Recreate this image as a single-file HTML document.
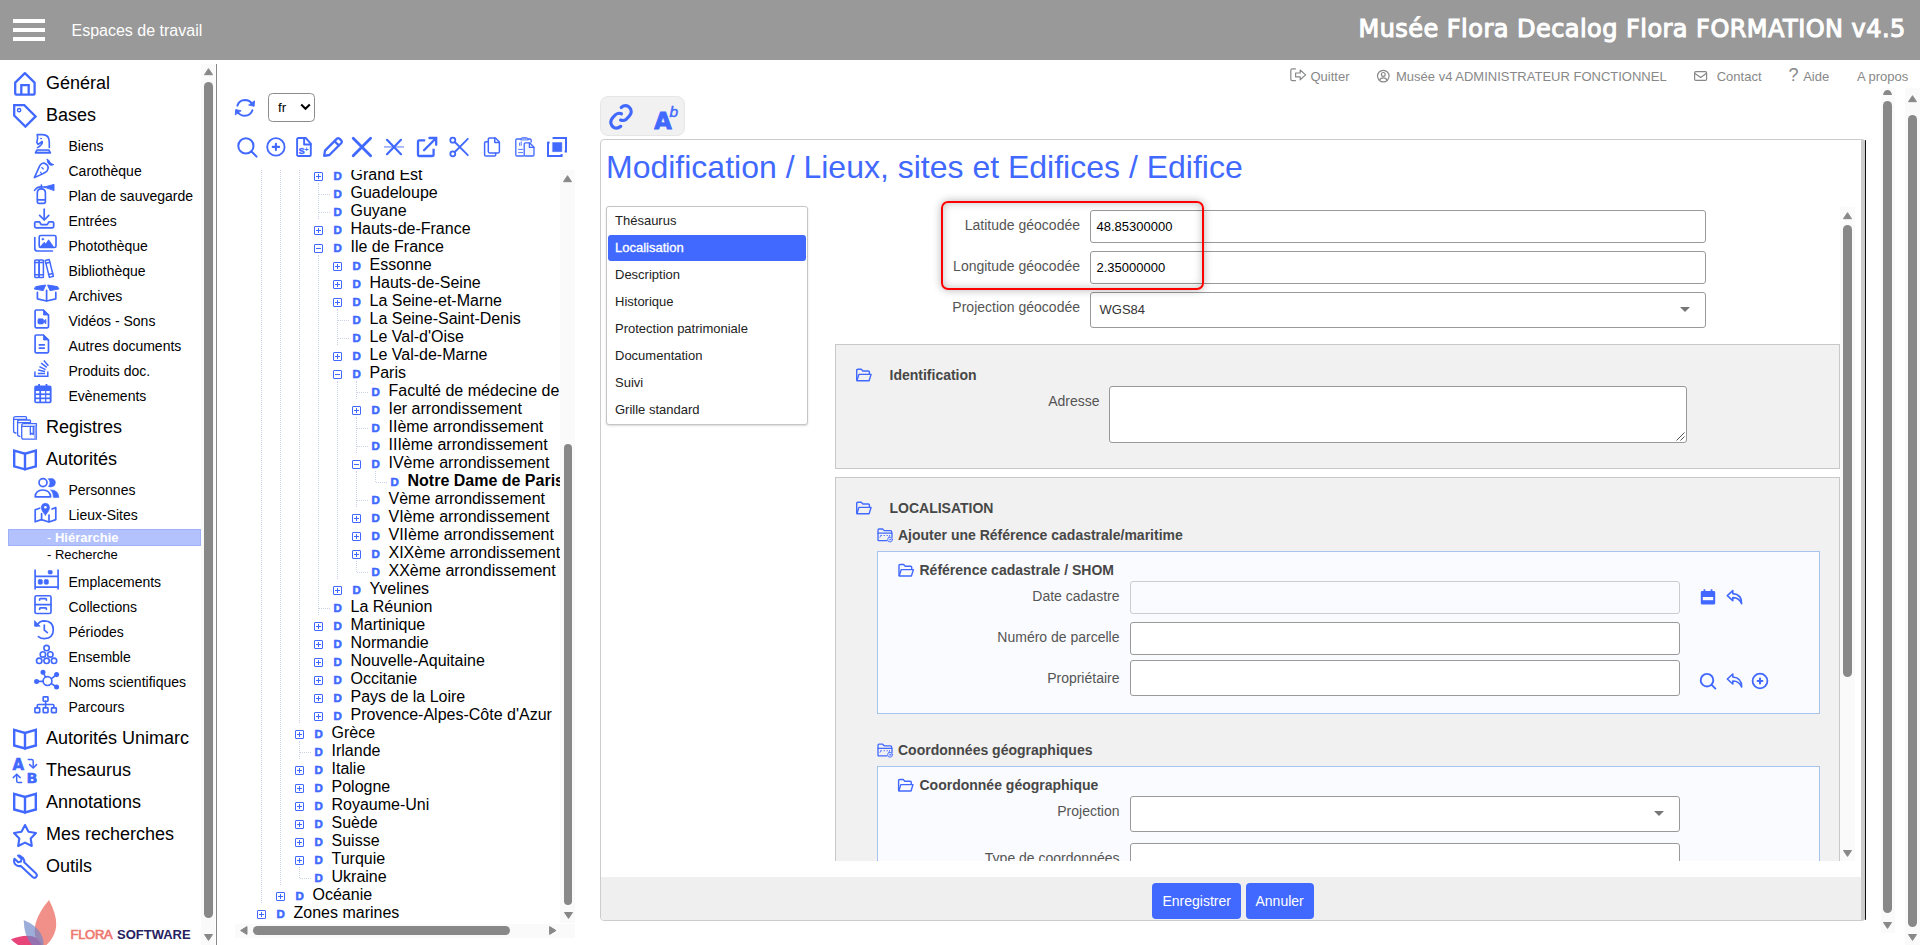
<!DOCTYPE html><html lang="fr"><head><meta charset="utf-8"><title>Flora</title><style>
*{box-sizing:border-box;margin:0;padding:0}
html,body{width:1920px;height:945px;overflow:hidden;background:#fff}
body{font-family:"Liberation Sans",sans-serif;color:#000;position:relative}
.a{position:absolute}
.t{position:absolute;white-space:nowrap;line-height:1}
svg{position:absolute;overflow:visible}
#hdr{left:0;top:0;width:1920px;height:60px;background:#999}
.m1{font-size:18px;left:46px}
.m2{font-size:14px;left:68.5px}
.m3{font-size:13px;left:47px}
.tr{position:absolute;font-size:16px;line-height:18px;height:18px;white-space:nowrap}
.ex{position:absolute;width:9px;height:9px;border:1px solid #4169ff;border-radius:1px;background:#fff}
.ex:before{content:"";position:absolute;left:1px;top:3px;width:5px;height:1px;background:#4169ff}
.ex.p:after{content:"";position:absolute;left:3px;top:1px;width:1px;height:5px;background:#4169ff}
.dd{position:absolute;font-size:11.5px;font-weight:bold;color:#4169ff;line-height:18px;height:18px;-webkit-text-stroke:0.55px #4169ff}
.vl{position:absolute;width:0;border-left:1px dotted #ccd3e6}
.hl{position:absolute;height:0;border-top:1px dotted #ccd3e6}
.thumb{position:absolute;background:#888;border-radius:5px}
.track{position:absolute;background:#fafafa}
.lbl{position:absolute;font-size:14px;color:#555;white-space:nowrap;line-height:1;text-align:right}
.inp{position:absolute;border:1px solid #999;border-radius:3px;background:#fff}
.bt{position:absolute;font-size:14px;font-weight:bold;color:#474747;white-space:nowrap;line-height:1}
.nav{position:absolute;font-size:13px;color:#888;white-space:nowrap;line-height:1;top:69.5px}
.mi{position:absolute;left:615px;font-size:13px;color:#222;line-height:1;white-space:nowrap}
</style></head><body>
<div id="hdr" class="a"></div>
<div class="a" style="left:13px;top:19px;width:32px;height:4px;background:#fff"></div>
<div class="a" style="left:13px;top:28px;width:32px;height:4px;background:#fff"></div>
<div class="a" style="left:13px;top:36.5px;width:32px;height:4px;background:#fff"></div>
<div class="t" style="left:71.5px;top:23px;font-size:16px;color:#fff">Espaces de travail</div>
<div class="t" id="apptitle" style="left:1358.5px;top:16.6px;letter-spacing:0.46px;font-family:DejaVu Sans,Liberation Sans,sans-serif;font-size:24px;color:#fff;-webkit-text-stroke:1.1px #fff">Musée Flora Decalog Flora FORMATION v4.5</div>
<div class="t m1" style="top:74px">Général</div>
<div class="t m1" style="top:106px">Bases</div>
<div class="t m1" style="top:418px">Registres</div>
<div class="t m1" style="top:450px">Autorités</div>
<div class="t m1" style="top:729px">Autorités Unimarc</div>
<div class="t m1" style="top:761px">Thesaurus</div>
<div class="t m1" style="top:793px">Annotations</div>
<div class="t m1" style="top:825px">Mes recherches</div>
<div class="t m1" style="top:857px">Outils</div>
<div class="t m2" style="top:139px">Biens</div>
<div class="t m2" style="top:164px">Carothèque</div>
<div class="t m2" style="top:189px">Plan de sauvegarde</div>
<div class="t m2" style="top:214px">Entrées</div>
<div class="t m2" style="top:239px">Photothèque</div>
<div class="t m2" style="top:264px">Bibliothèque</div>
<div class="t m2" style="top:289px">Archives</div>
<div class="t m2" style="top:314px">Vidéos - Sons</div>
<div class="t m2" style="top:339px">Autres documents</div>
<div class="t m2" style="top:364px">Produits doc.</div>
<div class="t m2" style="top:389px">Evènements</div>
<div class="t m2" style="top:483px">Personnes</div>
<div class="t m2" style="top:508px">Lieux-Sites</div>
<div class="t m2" style="top:575px">Emplacements</div>
<div class="t m2" style="top:600px">Collections</div>
<div class="t m2" style="top:625px">Périodes</div>
<div class="t m2" style="top:650px">Ensemble</div>
<div class="t m2" style="top:675px">Noms scientifiques</div>
<div class="t m2" style="top:700px">Parcours</div>
<div class="a" style="left:8px;top:529px;width:193px;height:17px;background:#b3c2fc;border:1px solid #9fb1fa"></div>
<div class="t m3" style="top:531px;color:#fff">- <b>Hiérarchie</b></div>
<div class="t m3" style="top:548px">- Recherche</div>
<div class="track" style="left:201px;top:64px;width:14px;height:881px"></div>
<div class="thumb" style="left:204px;top:82px;width:9px;height:836px"></div>
<svg style="left:204px;top:68.3px" width="9" height="8"><path d="M4.5 0.7L8.5 6.7H0.5z" fill="#888" stroke="#888" stroke-width="1" stroke-linejoin="round"/></svg>
<svg style="left:204px;top:934px" width="9" height="8"><path d="M0.5 0.5H8.5L4.5 6.4z" fill="#888" stroke="#888" stroke-width="1" stroke-linejoin="round"/></svg>
<div class="a" style="left:216px;top:64px;width:1px;height:881px;background:#888"></div>
<div class="t" style="left:70.5px;top:927.8px;font-size:13px;color:#ef7a72;letter-spacing:-0.3px;-webkit-text-stroke:0.7px #ef7a72">FLORA</div>
<div class="t" style="left:117px;top:927.8px;font-size:13px;font-weight:bold;color:#262262">SOFTWARE</div>
<svg style="left:0;top:895px" width="70" height="50" viewBox="0 895 70 50"><path d="M49 900Q58.5 918 55.5 930Q53 940 44 947H40Q32 935 36 922Q39.5 911 49 900z" fill="#f09088"/><path d="M10.9 939.3Q24 934 33 936.5Q40 939 42 947H22Q15 944 10.9 939.3z" fill="#e8457a"/><path d="M23.7 920Q36 925 41 934Q44.5 941 43 947H34Q24 938 23.7 920z" fill="#6f86c8" fill-opacity="0.68"/></svg>
<div class="a" id="tree" style="left:236px;top:170px;width:325px;height:752px;overflow:hidden">
<div class="vl" style="left:25.0px;top:-5px;height:738px"></div>
<div class="vl" style="left:44.0px;top:-5px;height:720px"></div>
<div class="vl" style="left:63.0px;top:-5px;height:558px"></div>
<div class="vl" style="left:63.0px;top:571px;height:18px"></div>
<div class="vl" style="left:63.0px;top:697px;height:11px"></div>
<div class="vl" style="left:82.0px;top:13px;height:36px"></div>
<div class="vl" style="left:82.0px;top:85px;height:360px"></div>
<div class="vl" style="left:101.0px;top:139px;height:36px"></div>
<div class="vl" style="left:101.0px;top:211px;height:198px"></div>
<div class="vl" style="left:120.0px;top:211px;height:18px"></div>
<div class="vl" style="left:120.0px;top:247px;height:36px"></div>
<div class="vl" style="left:120.0px;top:301px;height:36px"></div>
<div class="vl" style="left:120.0px;top:391px;height:11px"></div>
<div class="vl" style="left:139.0px;top:301px;height:11px"></div>
<div class="ex p" style="left:78.0px;top:2px"></div>
<div class="dd" style="left:97.5px;top:-3.5px">D</div>
<div class="tr" style="left:114.5px;top:-4px;">Grand Est</div>
<div class="hl" style="left:83.0px;top:24px;width:10.5px"></div>
<div class="dd" style="left:97.5px;top:14.5px">D</div>
<div class="tr" style="left:114.5px;top:14px;">Guadeloupe</div>
<div class="hl" style="left:83.0px;top:42px;width:10.5px"></div>
<div class="dd" style="left:97.5px;top:32.5px">D</div>
<div class="tr" style="left:114.5px;top:32px;">Guyane</div>
<div class="ex p" style="left:78.0px;top:56px"></div>
<div class="dd" style="left:97.5px;top:50.5px">D</div>
<div class="tr" style="left:114.5px;top:50px;">Hauts-de-France</div>
<div class="ex " style="left:78.0px;top:74px"></div>
<div class="dd" style="left:97.5px;top:68.5px">D</div>
<div class="tr" style="left:114.5px;top:68px;">Ile de France</div>
<div class="ex p" style="left:97.0px;top:92px"></div>
<div class="dd" style="left:116.5px;top:86.5px">D</div>
<div class="tr" style="left:133.5px;top:86px;">Essonne</div>
<div class="ex p" style="left:97.0px;top:110px"></div>
<div class="dd" style="left:116.5px;top:104.5px">D</div>
<div class="tr" style="left:133.5px;top:104px;">Hauts-de-Seine</div>
<div class="ex p" style="left:97.0px;top:128px"></div>
<div class="dd" style="left:116.5px;top:122.5px">D</div>
<div class="tr" style="left:133.5px;top:122px;">La Seine-et-Marne</div>
<div class="hl" style="left:102.0px;top:150px;width:10.5px"></div>
<div class="dd" style="left:116.5px;top:140.5px">D</div>
<div class="tr" style="left:133.5px;top:140px;">La Seine-Saint-Denis</div>
<div class="hl" style="left:102.0px;top:168px;width:10.5px"></div>
<div class="dd" style="left:116.5px;top:158.5px">D</div>
<div class="tr" style="left:133.5px;top:158px;">Le Val-d'Oise</div>
<div class="ex p" style="left:97.0px;top:182px"></div>
<div class="dd" style="left:116.5px;top:176.5px">D</div>
<div class="tr" style="left:133.5px;top:176px;">Le Val-de-Marne</div>
<div class="ex " style="left:97.0px;top:200px"></div>
<div class="dd" style="left:116.5px;top:194.5px">D</div>
<div class="tr" style="left:133.5px;top:194px;">Paris</div>
<div class="hl" style="left:121.0px;top:222px;width:10.5px"></div>
<div class="dd" style="left:135.5px;top:212.5px">D</div>
<div class="tr" style="left:152.5px;top:212px;">Faculté de médecine de Paris</div>
<div class="ex p" style="left:116.0px;top:236px"></div>
<div class="dd" style="left:135.5px;top:230.5px">D</div>
<div class="tr" style="left:152.5px;top:230px;">Ier arrondissement</div>
<div class="hl" style="left:121.0px;top:258px;width:10.5px"></div>
<div class="dd" style="left:135.5px;top:248.5px">D</div>
<div class="tr" style="left:152.5px;top:248px;">IIème arrondissement</div>
<div class="hl" style="left:121.0px;top:276px;width:10.5px"></div>
<div class="dd" style="left:135.5px;top:266.5px">D</div>
<div class="tr" style="left:152.5px;top:266px;">IIIème arrondissement</div>
<div class="ex " style="left:116.0px;top:290px"></div>
<div class="dd" style="left:135.5px;top:284.5px">D</div>
<div class="tr" style="left:152.5px;top:284px;">IVème arrondissement</div>
<div class="hl" style="left:140.0px;top:312px;width:10.5px"></div>
<div class="dd" style="left:154.5px;top:302.5px">D</div>
<div class="tr" style="left:171.5px;top:302px;font-weight:bold;">Notre Dame de Paris</div>
<div class="hl" style="left:121.0px;top:330px;width:10.5px"></div>
<div class="dd" style="left:135.5px;top:320.5px">D</div>
<div class="tr" style="left:152.5px;top:320px;">Vème arrondissement</div>
<div class="ex p" style="left:116.0px;top:344px"></div>
<div class="dd" style="left:135.5px;top:338.5px">D</div>
<div class="tr" style="left:152.5px;top:338px;">VIème arrondissement</div>
<div class="ex p" style="left:116.0px;top:362px"></div>
<div class="dd" style="left:135.5px;top:356.5px">D</div>
<div class="tr" style="left:152.5px;top:356px;">VIIème arrondissement</div>
<div class="ex p" style="left:116.0px;top:380px"></div>
<div class="dd" style="left:135.5px;top:374.5px">D</div>
<div class="tr" style="left:152.5px;top:374px;">XIXème arrondissement</div>
<div class="hl" style="left:121.0px;top:402px;width:10.5px"></div>
<div class="dd" style="left:135.5px;top:392.5px">D</div>
<div class="tr" style="left:152.5px;top:392px;">XXème arrondissement</div>
<div class="ex p" style="left:97.0px;top:416px"></div>
<div class="dd" style="left:116.5px;top:410.5px">D</div>
<div class="tr" style="left:133.5px;top:410px;">Yvelines</div>
<div class="hl" style="left:83.0px;top:438px;width:10.5px"></div>
<div class="dd" style="left:97.5px;top:428.5px">D</div>
<div class="tr" style="left:114.5px;top:428px;">La Réunion</div>
<div class="ex p" style="left:78.0px;top:452px"></div>
<div class="dd" style="left:97.5px;top:446.5px">D</div>
<div class="tr" style="left:114.5px;top:446px;">Martinique</div>
<div class="ex p" style="left:78.0px;top:470px"></div>
<div class="dd" style="left:97.5px;top:464.5px">D</div>
<div class="tr" style="left:114.5px;top:464px;">Normandie</div>
<div class="ex p" style="left:78.0px;top:488px"></div>
<div class="dd" style="left:97.5px;top:482.5px">D</div>
<div class="tr" style="left:114.5px;top:482px;">Nouvelle-Aquitaine</div>
<div class="ex p" style="left:78.0px;top:506px"></div>
<div class="dd" style="left:97.5px;top:500.5px">D</div>
<div class="tr" style="left:114.5px;top:500px;">Occitanie</div>
<div class="ex p" style="left:78.0px;top:524px"></div>
<div class="dd" style="left:97.5px;top:518.5px">D</div>
<div class="tr" style="left:114.5px;top:518px;">Pays de la Loire</div>
<div class="ex p" style="left:78.0px;top:542px"></div>
<div class="dd" style="left:97.5px;top:536.5px">D</div>
<div class="tr" style="left:114.5px;top:536px;">Provence-Alpes-Côte d'Azur</div>
<div class="ex p" style="left:59.0px;top:560px"></div>
<div class="dd" style="left:78.5px;top:554.5px">D</div>
<div class="tr" style="left:95.5px;top:554px;">Grèce</div>
<div class="hl" style="left:64.0px;top:582px;width:10.5px"></div>
<div class="dd" style="left:78.5px;top:572.5px">D</div>
<div class="tr" style="left:95.5px;top:572px;">Irlande</div>
<div class="ex p" style="left:59.0px;top:596px"></div>
<div class="dd" style="left:78.5px;top:590.5px">D</div>
<div class="tr" style="left:95.5px;top:590px;">Italie</div>
<div class="ex p" style="left:59.0px;top:614px"></div>
<div class="dd" style="left:78.5px;top:608.5px">D</div>
<div class="tr" style="left:95.5px;top:608px;">Pologne</div>
<div class="ex p" style="left:59.0px;top:632px"></div>
<div class="dd" style="left:78.5px;top:626.5px">D</div>
<div class="tr" style="left:95.5px;top:626px;">Royaume-Uni</div>
<div class="ex p" style="left:59.0px;top:650px"></div>
<div class="dd" style="left:78.5px;top:644.5px">D</div>
<div class="tr" style="left:95.5px;top:644px;">Suède</div>
<div class="ex p" style="left:59.0px;top:668px"></div>
<div class="dd" style="left:78.5px;top:662.5px">D</div>
<div class="tr" style="left:95.5px;top:662px;">Suisse</div>
<div class="ex p" style="left:59.0px;top:686px"></div>
<div class="dd" style="left:78.5px;top:680.5px">D</div>
<div class="tr" style="left:95.5px;top:680px;">Turquie</div>
<div class="hl" style="left:64.0px;top:708px;width:10.5px"></div>
<div class="dd" style="left:78.5px;top:698.5px">D</div>
<div class="tr" style="left:95.5px;top:698px;">Ukraine</div>
<div class="ex p" style="left:40.0px;top:722px"></div>
<div class="dd" style="left:59.5px;top:716.5px">D</div>
<div class="tr" style="left:76.5px;top:716px;">Océanie</div>
<div class="ex p" style="left:21.0px;top:740px"></div>
<div class="dd" style="left:40.5px;top:734.5px">D</div>
<div class="tr" style="left:57.5px;top:734px;">Zones marines</div>
</div>
<div class="track" style="left:560px;top:170px;width:15px;height:753px"></div>
<div class="thumb" style="left:563.5px;top:444px;width:8.5px;height:461px"></div>
<svg style="left:563px;top:175px" width="9" height="8"><path d="M4.5 0.7L8.5 6.7H0.5z" fill="#888" stroke="#888" stroke-width="1" stroke-linejoin="round"/></svg>
<svg style="left:563.5px;top:912px" width="9" height="8"><path d="M0.5 0.5H8.5L4.5 6.4z" fill="#888" stroke="#888" stroke-width="1" stroke-linejoin="round"/></svg>
<div class="track" style="left:235px;top:923.5px;width:340px;height:14.5px"></div>
<div class="thumb" style="left:253px;top:926px;width:257px;height:9px"></div>
<svg style="left:239.5px;top:926px" width="8" height="9"><path d="M0.6 4.5L7 0.6V8.4z" fill="#888" stroke="#888" stroke-width="1" stroke-linejoin="round"/></svg>
<svg style="left:548.5px;top:926px" width="8" height="9"><path d="M7 4.5L0.6 0.6V8.4z" fill="#888" stroke="#888" stroke-width="1" stroke-linejoin="round"/></svg>
<div class="a" style="left:268px;top:93px;width:47px;height:29px;border:1px solid #8c8c8c;border-radius:4.5px;background:#fff"></div>
<div class="t" style="left:278px;top:100.8px;font-size:13.3px">fr</div>
<svg style="left:300px;top:103px" width="11" height="8"><path d="M1.2 1.5L5.5 5.8L9.8 1.5" fill="none" stroke="#000" stroke-width="2"/></svg>
<div class="nav" style="left:1310.5px">Quitter</div>
<div class="nav" style="left:1396px">Musée v4 ADMINISTRATEUR FONCTIONNEL</div>
<div class="nav" style="left:1716.7px">Contact</div>
<div class="nav" style="left:1803.2px">Aide</div>
<div class="nav" style="left:1857px">A propos</div>
<div class="track" style="left:1880.5px;top:88px;width:14.5px;height:845px"></div>
<div class="thumb" style="left:1883px;top:101px;width:9px;height:812px"></div>
<svg style="left:1883px;top:90px" width="9" height="5"><path d="M0 5Q1 0 4.5 0Q8 0 9 5z" fill="#888"/></svg>
<svg style="left:1883px;top:922px" width="9" height="8"><path d="M0.5 0.5H8.5L4.5 6.4z" fill="#888" stroke="#888" stroke-width="1" stroke-linejoin="round"/></svg>
<div class="track" style="left:1905px;top:88px;width:15px;height:857px"></div>
<div class="thumb" style="left:1908px;top:115px;width:9px;height:812px"></div>
<svg style="left:1908px;top:95px" width="9" height="8"><path d="M4.5 0.7L8.5 6.7H0.5z" fill="#888" stroke="#888" stroke-width="1" stroke-linejoin="round"/></svg>
<svg style="left:1908px;top:934px" width="9" height="8"><path d="M0.5 0.5H8.5L4.5 6.4z" fill="#888" stroke="#888" stroke-width="1" stroke-linejoin="round"/></svg>
<div class="a" style="left:600px;top:96px;width:85px;height:40px;background:#f1f1f1;border:1px solid #e6e6e6;border-radius:8px"></div>
<div class="a" style="left:600px;top:139px;width:1266px;height:782px;border:1px solid #ccc;border-radius:4px;background:#fff"></div>
<div class="a" style="left:1860.5px;top:140px;width:5px;height:780px;background:#ccc"></div>
<div class="a" style="left:1865px;top:140px;width:1.4px;height:780px;background:#111;border-radius:0 3px 3px 0"></div>
<div class="a" style="left:601px;top:877px;width:1259.5px;height:43px;background:#efefef;border-radius:0 0 0 3px"></div>
<div class="t" id="ttl" style="left:606px;top:151px;font-size:32px;color:#4169ff">Modification / Lieux, sites et Edifices / Edifice</div>
<div class="a" style="left:606px;top:206px;width:202px;height:219px;border:1px solid #c5c5c5;border-radius:3px;background:#fff;box-shadow:0 1px 2px rgba(0,0,0,.15)"></div>
<div class="a" style="left:608px;top:235px;width:198px;height:26px;background:#4169ff;border-radius:3px"></div>
<div class="mi" style="top:214px;">Thésaurus</div>
<div class="mi" style="top:241px;color:#fff;-webkit-text-stroke:0.3px #fff;">Localisation</div>
<div class="mi" style="top:268px;">Description</div>
<div class="mi" style="top:295px;">Historique</div>
<div class="mi" style="top:322px;">Protection patrimoniale</div>
<div class="mi" style="top:349px;">Documentation</div>
<div class="mi" style="top:376px;">Suivi</div>
<div class="mi" style="top:403px;">Grille standard</div>
<div class="lbl" style="right:840px;top:217.5px">Latitude géocodée</div>
<div class="lbl" style="right:840px;top:258.5px">Longitude géocodée</div>
<div class="lbl" style="right:840px;top:299.5px">Projection géocodée</div>
<div class="inp" style="left:1090px;top:210px;width:616px;height:33px"></div>
<div class="inp" style="left:1090px;top:251px;width:616px;height:33px"></div>
<div class="inp" style="left:1090px;top:292px;width:616px;height:36px"></div>
<div class="t" style="left:1096.5px;top:220px;font-size:13px">48.85300000</div>
<div class="t" style="left:1096.5px;top:261px;font-size:13px">2.35000000</div>
<div class="t" style="left:1099.5px;top:303px;font-size:13px;color:#333">WGS84</div>
<svg style="left:1680px;top:307px" width="10" height="5"><path d="M0 0H10L5 5z" fill="#777"/></svg>
<div class="a" style="left:940.7px;top:201px;width:263px;height:89px;border:2px solid #f00;border-radius:7px;box-shadow:0 0 8px rgba(0,0,0,.3),inset 0 0 8px rgba(0,0,0,.25)"></div>
<div class="a" style="left:830px;top:340px;width:1012px;height:521px;overflow:hidden">
<div class="a" style="left:5px;top:4px;width:1005px;height:125px;background:#f1f1f1;border:1px solid #c8c8c8"></div>
<div class="a" style="left:5px;top:137px;width:1005px;height:600px;background:#f1f1f1;border:1px solid #c8c8c8"></div>
<div class="a" style="left:47px;top:211px;width:943px;height:163px;background:#fafbfe;border:1px solid #a8c4ee"></div>
<div class="a" style="left:47px;top:426px;width:943px;height:300px;background:#fafbfe;border:1px solid #a8c4ee"></div>
<div class="bt" style="left:59.5px;top:27.5px">Identification</div>
<div class="bt" style="left:59.5px;top:160.5px">LOCALISATION</div>
<div class="bt" style="left:68px;top:187.5px">Ajouter une Référence cadastrale/maritime</div>
<div class="bt" style="left:89.5px;top:223.0px">Référence cadastrale / SHOM</div>
<div class="bt" style="left:68px;top:402.5px">Coordonnées géographiques</div>
<div class="bt" style="left:89.5px;top:437.5px">Coordonnée géographique</div>
<div class="lbl" style="right:742.5px;top:53.5px">Adresse</div>
<div class="lbl" style="right:722.5px;top:248.5px">Date cadastre</div>
<div class="lbl" style="right:722.5px;top:289.5px">Numéro de parcelle</div>
<div class="lbl" style="right:722.5px;top:330.5px">Propriétaire</div>
<div class="lbl" style="right:722.5px;top:463.70000000000005px">Projection</div>
<div class="lbl" style="right:722.5px;top:510.79999999999995px">Type de coordonnées</div>
<div class="inp" style="left:279px;top:46px;width:578px;height:57px;"></div>
<div class="inp" style="left:300px;top:241px;width:550px;height:33px;border-color:#ccc;background:#fafbfe"></div>
<div class="inp" style="left:300px;top:282px;width:550px;height:33px;"></div>
<div class="inp" style="left:300px;top:320px;width:550px;height:36px;"></div>
<div class="inp" style="left:300px;top:456px;width:550px;height:36px;"></div>
<div class="inp" style="left:300px;top:503px;width:550px;height:36px;"></div>
<svg style="left:824px;top:470.5px" width="10" height="5"><path d="M0 0H10L5 5z" fill="#777"/></svg>
<svg style="left:846px;top:92px" width="9" height="9"><path d="M8.5 0.5L0.5 8.5M8.5 4.5L4.5 8.5" stroke="#555" stroke-width="1" fill="none"/></svg>
</div>
<div class="track" style="left:1840px;top:206.5px;width:15px;height:654.5px"></div>
<div class="thumb" style="left:1843px;top:225px;width:9px;height:452px"></div>
<svg style="left:1843px;top:212px" width="9" height="8"><path d="M4.5 0.7L8.5 6.7H0.5z" fill="#888" stroke="#888" stroke-width="1" stroke-linejoin="round"/></svg>
<svg style="left:1843px;top:850px" width="9" height="8"><path d="M0.5 0.5H8.5L4.5 6.4z" fill="#888" stroke="#888" stroke-width="1" stroke-linejoin="round"/></svg>
<div class="a" style="left:1152px;top:883px;width:89px;height:36px;background:#4169ff;border-radius:4px"></div>
<div class="a" style="left:1246px;top:883px;width:68px;height:36px;background:#4169ff;border-radius:4px"></div>
<div class="t" style="left:1162.5px;top:894px;font-size:14px;color:#fff">Enregistrer</div>
<div class="t" style="left:1255.5px;top:894px;font-size:14px;color:#fff">Annuler</div>
<svg style="left:0;top:0;pointer-events:none" width="1920" height="945" viewBox="0 0 1920 945"><g transform="translate(0 0)" fill="none" stroke="#4169ff" stroke-width="2.3" stroke-linecap="round" stroke-linejoin="round" ><path d="M15.2 82.6L24.9 73.2L34.6 82.6V93.4Q34.6 94.6 33.4 94.6H16.4Q15.2 94.6 15.2 93.4z"/><path d="M21.3 94.3V85.2H28.7V94.3" stroke-linejoin="miter" stroke-linecap="butt"/></g>
<g transform="translate(0 0)" fill="none" stroke="#4169ff" stroke-width="2.3" stroke-linecap="round" stroke-linejoin="round" ><path d="M14.2 105.1H24.3L35.6 116.4L25.4 126.6L14.2 115.6z" stroke-linejoin="miter"/><circle cx="19.1" cy="110.2" r="1.6" stroke-width="1.5"/></g>
<g transform="translate(0 0)" fill="none" stroke="#4169ff" stroke-width="1.3" stroke-linecap="round" stroke-linejoin="round" ><path d="M26.5 419V417.6Q26.5 416.6 25.5 416.6H15.5Q13.6 416.6 13.6 418.6V431Q13.6 433 16 433"/><path d="M14 419.3H26"/><path d="M30.5 422.5V421Q30.5 420 29.5 420H19.5Q17.6 420 17.6 422V434.5Q17.6 436.3 20 436.3"/><path d="M18 422.7H30"/><path d="M23.6 423.6H36.4V439.2H23.6Q21.7 439.2 21.7 437.3V425.5Q21.7 423.6 23.6 423.6z"/><path d="M22 426.4H36"/><path d="M30.3 426.5V434.5L31.8 433.2L33.3 434.5V426.5"/><path d="M35.3 426.5V438.5" stroke-width="2.2" stroke="#8aa0ff"/></g>
<g transform="translate(0 449)" fill="none" stroke="#4169ff" stroke-width="2.4" stroke-linecap="round" stroke-linejoin="round" ><path d="M14.2 1.7L25 4.7L35.8 1.7V17.3L25 20.3L14.2 17.3z" stroke-linejoin="miter"/><path d="M25 4.7V20.3"/></g>
<g transform="translate(0 728.2)" fill="none" stroke="#4169ff" stroke-width="2.4" stroke-linecap="round" stroke-linejoin="round" ><path d="M14.2 1.7L25 4.7L35.8 1.7V17.3L25 20.3L14.2 17.3z" stroke-linejoin="miter"/><path d="M25 4.7V20.3"/></g>
<g transform="translate(0 792.2)" fill="none" stroke="#4169ff" stroke-width="2.4" stroke-linecap="round" stroke-linejoin="round" ><path d="M14.2 1.7L25 4.7L35.8 1.7V17.3L25 20.3L14.2 17.3z" stroke-linejoin="miter"/><path d="M25 4.7V20.3"/></g>
<text x="12.6" y="769.9" font-family="'DejaVu Sans','Liberation Sans',sans-serif" font-weight="bold" font-size="15" fill="#4169ff" stroke="#4169ff" stroke-width="0.5">A</text>
<text x="26.6" y="783.2" font-family="'DejaVu Sans','Liberation Sans',sans-serif" font-weight="bold" font-size="14.5" fill="#4169ff" stroke="#4169ff" stroke-width="0.5">B</text>
<g transform="translate(0 0)" fill="none" stroke="#4169ff" stroke-width="1.5" stroke-linecap="round" stroke-linejoin="round" ><path d="M28.3 759.6H31.5Q33.2 759.6 33.2 761.3V767.6"/><path d="M29.6 764.6L33.2 768L36.6 764.6"/><path d="M21.6 782.6H18.4Q16.7 782.6 16.7 780.9V774.4"/><path d="M13.3 777.6L16.7 774.2L20.2 777.6"/></g>
<g transform="translate(0 0)" fill="none" stroke="#4169ff" stroke-width="2.1" stroke-linecap="round" stroke-linejoin="round" ><path d="M25.0 825.0L28.5 831.7L36.0 833.0L30.7 838.5L31.8 846.0L25.0 842.6L18.2 846.0L19.3 838.5L14.0 833.0L21.5 831.7z" stroke-linejoin="round"/></g>
<path d="M20.9 856.3Q23.6 857.6 24.3 860.4L24.2 862.3L36.1 873.6Q37.7 875.3 36.1 877Q34.4 878.7 32.6 877.1L20.8 865.9Q17.4 866.8 15.3 864.4Q13.3 861.9 14.5 858.7L18.2 862.3L20.9 861.6L21.6 859L18 855.6Q19.4 855.3 20.9 856.3z" fill="none" stroke="#4169ff" stroke-width="2.05" stroke-linejoin="round"/>
<g transform="translate(0 0)" fill="none" stroke="#4169ff" stroke-width="1.65" stroke-linecap="round" stroke-linejoin="round" ><path d="M37.6 147.6Q43 144.5 42.2 141.5L38.2 144.4L36.8 142.6Q38.4 138.5 37.2 134.6H42.5Q49.3 134.6 49.3 142V147.6"/><circle cx="41" cy="138.6" r="0.5" stroke-width="1"/><path d="M37 150H48.8L50.4 152.8H35.4z" fill="#b9c6ff"/></g>
<g transform="translate(0 0)" fill="none" stroke="#4169ff" stroke-width="1.65" stroke-linecap="round" stroke-linejoin="round" ><path d="M34.4 177.6L39.8 165.6Q42.3 161.6 46.2 164.2Q49.8 167.2 46.8 171.2Q45.6 172.6 34.4 177.6z"/><path d="M41.8 167.5L43.3 169M40.3 172.2L41.6 173.5" stroke-width="1.1"/><path d="M47.2 159.4Q47 162.2 49 164.4Q51.4 166.2 53.8 164.6Q51.5 164.2 50.2 162.6Q49.6 160 47.2 159.4z" fill="#4169ff" stroke-width="1"/></g>
<g transform="translate(0 0)" fill="none" stroke="#4169ff" stroke-width="1.65" stroke-linecap="round" stroke-linejoin="round" ><path d="M37.3 193Q37.3 188.8 41.4 188.8Q45.4 188.8 45.4 193V201.6Q45.4 203.4 43.6 203.4H39.1Q37.3 203.4 37.3 201.6z"/><path d="M37.5 199.8H45.2"/><path d="M41.4 188.6V185"/><path d="M34.6 190.4Q37 186.6 41.4 186.9L45 187"/><path d="M44.5 187L54 184.4V190.2z" fill="#4169ff" stroke-width="1"/></g>
<g transform="translate(0 0)" fill="none" stroke="#4169ff" stroke-width="1.7" stroke-linecap="round" stroke-linejoin="round" ><path d="M44.2 209.2V219.6"/><path d="M39.6 215.4L44.2 220L48.8 215.4"/><path d="M39.5 221.8H36Q34.7 221.8 34.7 223.1V226.5Q34.7 227.8 36 227.8H52.4Q53.7 227.8 53.7 226.5V223.1Q53.7 221.8 52.4 221.8H49L47.2 224.6H41.2z" fill="#eef1ff"/></g>
<g transform="translate(0 0)" fill="none" stroke="#4169ff" stroke-width="1.65" stroke-linecap="round" stroke-linejoin="round" ><rect x="39.2" y="235.5" width="16.8" height="12" rx="1.6"/><path d="M34.8 237.6V248.4Q34.8 251 37.4 251H52.4"/><path d="M40 247L44.2 242.3L45.8 244L48.6 239.8L53.6 247z" fill="#4169ff" stroke-width="0.8"/><circle cx="42.8" cy="239.2" r="0.9" fill="#4169ff" stroke-width="0.6"/></g>
<g transform="translate(0 0)" fill="none" stroke="#4169ff" stroke-width="1.5" stroke-linecap="round" stroke-linejoin="round" ><rect x="34.8" y="260" width="4.3" height="17.6" rx="0.8"/><rect x="39.1" y="260" width="4.3" height="17.6" rx="0.8"/><path d="M34.8 262.6H43.4M34.8 274.8H43.4"/><path d="M45.2 260.6L49.2 259.6L53.4 276.3L49.4 277.4z"/><path d="M45.9 263.2L49.9 262.2M48.6 274.6L52.7 273.6"/></g>
<g transform="translate(0 0)" fill="none" stroke="#4169ff" stroke-width="1.7" stroke-linecap="round" stroke-linejoin="round" ><path d="M36 286.6L45.6 285L43.2 290.6L34.6 289z" fill="#4169ff" stroke-width="1"/><path d="M57.2 286.6L47.6 285L50 290.6L58.6 289z" fill="#4169ff" stroke-width="1"/><path d="M37.4 292.4V298.8L46.6 301L55.8 298.8V292.4"/><path d="M46.6 290.4V300.8"/></g>
<g transform="translate(34.3 309.2)" fill="none" stroke="#4169ff" stroke-width="1.7" stroke-linecap="round" stroke-linejoin="round" ><path d="M2 0.8H9L14.2 6V17.4Q14.2 18.6 13 18.6H2Q0.8 18.6 0.8 17.4V2Q0.8 0.8 2 0.8z"/><path d="M9.2 0.8V5.8H14.2z" fill="#4169ff" stroke-width="0.8"/><rect x="3.6" y="9.6" width="5.6" height="5.2" rx="1.2" fill="#4169ff" stroke-width="0.6"/><path d="M9 12.2L11.6 10.2V14.2z" fill="#4169ff" stroke-width="0.8"/></g>
<g transform="translate(34.3 334.2)" fill="none" stroke="#4169ff" stroke-width="1.7" stroke-linecap="round" stroke-linejoin="round" ><path d="M2 0.8H9L14.2 6V17.4Q14.2 18.6 13 18.6H2Q0.8 18.6 0.8 17.4V2Q0.8 0.8 2 0.8z"/><path d="M9.2 0.8V5.8H14.2z" fill="#4169ff" stroke-width="0.8"/><path d="M4.4 10.6H10.6M4.4 14H10.6" stroke-linecap="butt"/></g>
<g transform="translate(0 0)" fill="none" stroke="#4169ff" stroke-width="1.5" stroke-linecap="round" stroke-linejoin="round" ><path d="M34.9 371.6V376.2H47.8V371.6" stroke-linejoin="miter" stroke-linecap="butt"/><path d="M37.8 373.4H45M38.2 370L45 371.6M39.4 366.6L45.6 369.6M41.2 363.2L46.8 367.4M43.8 360.6L48.4 365.8" stroke-linecap="butt"/></g>
<path d="M38.2 383.9h1.8v1.7h5.6v-1.7h1.8v1.7h2.2q2 0 2 2v13.6q0 2-2 2h-13.4q-2 0-2-2v-13.6q0-2 2-2h2z" fill="#4169ff"/>
<rect x="35.9" y="391.0" width="3.4" height="2.4" fill="#fff"/>
<rect x="41.1" y="391.0" width="4" height="2.4" fill="#fff"/>
<rect x="46.3" y="391.0" width="3.4" height="2.4" fill="#fff"/>
<rect x="35.9" y="395.1" width="3.4" height="2.4" fill="#fff"/>
<rect x="41.1" y="395.1" width="4" height="2.4" fill="#fff"/>
<rect x="46.3" y="395.1" width="3.4" height="2.4" fill="#fff"/>
<rect x="35.9" y="399.2" width="3.4" height="2.4" fill="#fff"/>
<rect x="41.1" y="399.2" width="4" height="2.4" fill="#fff"/>
<rect x="46.3" y="399.2" width="3.4" height="2.4" fill="#fff"/>
<g transform="translate(0 0)" fill="none" stroke="#4169ff" stroke-width="1.7" stroke-linecap="round" stroke-linejoin="round" ><circle cx="43" cy="482.6" r="4"/><path d="M35.2 496.8Q35.6 490 42.8 490Q50 490 50.6 496.8z"/><path d="M48.4 478.9Q49.8 478.4 51 478.4Q55.4 478.6 55.4 482.8Q55.2 486.8 51 487Q49.8 487 48.4 486.4Q50 485 50 482.7Q50 480.4 48.4 478.9z" fill="#4169ff" stroke-width="0.6"/><path d="M50.8 489.9Q58.4 489.6 58.9 497.4H53.4Q53.4 492.4 50.8 489.9z" fill="#4169ff" stroke-width="0.6"/></g>
<g transform="translate(0 0)" fill="none" stroke="#4169ff" stroke-width="1.7" stroke-linecap="round" stroke-linejoin="round" ><path d="M39.6 508.2L35.2 509.8V521.8L41.4 519.6L49 522L55.8 519.6V507.6L52 509"/><path d="M41.6 513.5V519.4M49 515V521.6"/><path d="M45.4 515.2Q41.2 510.2 41.2 507.4Q41.4 503.4 45.4 503.2Q49.4 503.4 49.6 507.4Q49.6 510.2 45.4 515.2z" fill="#4169ff" stroke-width="0.6"/><circle cx="45.4" cy="507.2" r="1.3" fill="#fff" stroke="none"/></g>
<g transform="translate(0 0)" fill="none" stroke="#4169ff" stroke-width="1.7" stroke-linecap="round" stroke-linejoin="round" ><path d="M35.1 570.2V588.8M58.1 570.2V588.8M35.1 576.4H58.1M35.1 587.2H58.1"/><rect x="48.2" y="570.6" width="4" height="3.4" rx="0.8" fill="#4169ff" stroke-width="0.6"/><rect x="38.2" y="579.6" width="4.2" height="4.6" rx="1.2" fill="#4169ff" stroke-width="0.6"/><rect x="44.2" y="579.6" width="4.2" height="4.6" rx="1.2" fill="#4169ff" stroke-width="0.6"/></g>
<g transform="translate(0 0)" fill="none" stroke="#4169ff" stroke-width="1.65" stroke-linecap="round" stroke-linejoin="round" ><rect x="35" y="595.7" width="16" height="17.8" rx="1.6"/><path d="M35 604.6H51"/><path d="M39.6 600.2V599.4Q39.6 598.6 40.4 598.6H45.6Q46.4 598.6 46.4 599.4V600.2M39.6 609.4V608.6Q39.6 607.8 40.4 607.8H45.6Q46.4 607.8 46.4 608.6V609.4"/></g>
<g transform="translate(0 0)" fill="none" stroke="#4169ff" stroke-width="1.7" stroke-linecap="round" stroke-linejoin="round" ><path d="M36.6 625.6Q39.4 620.9 44.4 620.9Q53.2 621.2 53.3 629.8Q53.2 638.4 44.4 638.7Q40.8 638.7 38.4 636.6"/><path d="M34.6 621V626.2H39.8z" fill="#4169ff" stroke-width="0.8"/><path d="M44.3 625V630.2L47.4 632.6"/></g>
<g transform="translate(0 0)" fill="none" stroke="#4169ff" stroke-width="1.65" stroke-linecap="round" stroke-linejoin="round" ><circle cx="46.6" cy="648" r="2.7"/><circle cx="42.9" cy="654.4" r="2.7"/><circle cx="50.3" cy="654.4" r="2.7"/><circle cx="39.2" cy="660.8" r="2.7"/><circle cx="46.6" cy="660.8" r="2.7"/><circle cx="54" cy="660.8" r="2.7"/></g>
<g transform="translate(0 0)" fill="none" stroke="#4169ff" stroke-width="1.65" stroke-linecap="round" stroke-linejoin="round" ><circle cx="47.5" cy="681.1" r="4.4"/><path d="M45.4 677L43.2 672.4M51.4 678.6L56.2 675M42.8 681.3H36.6M51.4 683.6L56.2 686.8"/><circle cx="43" cy="672.2" r="1.7" fill="#4169ff"/><circle cx="56.6" cy="674.6" r="1.7" fill="#4169ff"/><circle cx="36.6" cy="681.4" r="1.7" fill="#4169ff"/><circle cx="56.6" cy="687" r="1.7" fill="#4169ff"/></g>
<g transform="translate(0 0)" fill="none" stroke="#4169ff" stroke-width="1.65" stroke-linecap="round" stroke-linejoin="round" ><rect x="43.2" y="696.8" width="4.8" height="4.4" rx="0.6"/><path d="M45.6 701.4V707.4M37.3 707.4V705.6Q37.3 704.5 38.4 704.5H52.8Q53.9 704.5 53.9 705.6V707.4"/><rect x="34.9" y="707.8" width="4.8" height="4.8" rx="0.6"/><rect x="43.2" y="707.8" width="4.8" height="4.8" rx="0.6"/><rect x="51.5" y="707.8" width="4.8" height="4.8" rx="0.6"/></g>
<g transform="translate(0 0)" fill="none" stroke="#4169ff" stroke-width="2" stroke-linecap="round" stroke-linejoin="round" ><path d="M237.4 105.6Q239.2 100.2 244.9 100Q249.6 100.1 252.4 103.8"/><path d="M254.5 101.2L254.1 106.3L249 105.1z" fill="#4169ff" stroke-width="0.9"/><path d="M252.4 110.2Q250.6 115.6 244.9 115.8Q240.2 115.7 237.4 112"/><path d="M235.3 114.6L235.7 109.5L240.8 110.7z" fill="#4169ff" stroke-width="0.9"/></g>
<g transform="translate(0 0)" fill="none" stroke="#4169ff" stroke-width="2" stroke-linecap="round" stroke-linejoin="round" ><circle cx="245.9" cy="145.9" r="7.6"/><path d="M251.5 151.5L256.6 156.6"/></g>
<g transform="translate(0 0)" fill="none" stroke="#4169ff" stroke-width="1.8" stroke-linecap="round" stroke-linejoin="round" ><circle cx="275.9" cy="146.9" r="8.7"/><path d="M272.7 146.9H279.1M275.9 143.7V150.1" stroke-width="2.1"/></g>
<g transform="translate(296.1 137.1)" fill="none" stroke="#4169ff" stroke-width="1.9" stroke-linecap="round" stroke-linejoin="round" ><path d="M2.4 0.9H9.6L14.7 6.6V17.6Q14.7 18.9 13.4 18.9H2.4Q1 18.9 1 17.6V2.2Q1 0.9 2.4 0.9z"/><path d="M8 1V7.4H14.6"/></g>
<text x="298.4" y="154.4" font-family="'Liberation Sans',sans-serif" font-weight="bold" font-size="11.5" fill="#4169ff" stroke="#4169ff" stroke-width="0.3">s</text>
<text x="304.6" y="151.6" font-family="'Liberation Sans',sans-serif" font-weight="bold" font-size="7" fill="#4169ff">+</text>
<g transform="translate(0 0)" fill="none" stroke="#4169ff" stroke-width="2.3" stroke-linecap="round" stroke-linejoin="round" ><path d="M324.2 155.8L325 150.6L337 138.6Q338.2 137.6 339.4 138.6L341.4 140.6Q342.4 141.8 341.4 143L329.4 155z" stroke-linejoin="round"/><path d="M334.6 141.2L338.8 145.4"/></g>
<g transform="translate(0 0)" fill="none" stroke="#4169ff" stroke-width="2.8" stroke-linecap="round" stroke-linejoin="round" ><path d="M353.2 138.2L370.6 155.8M370.6 138.2L353.2 155.8"/></g>
<path d="M384 146.9H404" stroke="#a3b5ff" stroke-width="1.8"/>
<g transform="translate(0 0)" fill="none" stroke="#4169ff" stroke-width="2.2" stroke-linecap="round" stroke-linejoin="round" ><path d="M387 139.8L401 154.2M401 139.8L387 154.2"/></g>
<g transform="translate(0 0)" fill="none" stroke="#4169ff" stroke-width="2.3" stroke-linecap="round" stroke-linejoin="round" ><path d="M425.2 140.4H419.4Q418 140.4 418 141.8V154.6Q418 156 419.4 156H432.2Q433.6 156 433.6 154.6V148.8" stroke-linecap="butt"/><path d="M424 150.2L436 138.2M429.4 138H436.2V144.8" stroke-linejoin="miter"/></g>
<g transform="translate(0 0)" fill="none" stroke="#4169ff" stroke-width="1.8" stroke-linecap="round" stroke-linejoin="round" ><circle cx="452.8" cy="140.2" r="2.5"/><circle cx="452.8" cy="153.8" r="2.5"/><path d="M454.8 142L467.8 155.2M454.8 152L467.8 138.8" /></g>
<path d="M457.6 147.2L462 151.4" stroke="#fff" stroke-width="0" />
<g transform="translate(0 0)" fill="none" stroke="#4169ff" stroke-width="1.5" stroke-linecap="round" stroke-linejoin="round" ><path d="M489.6 137.9H495.4L499.4 142V151.6Q499.4 152.9 498.1 152.9H489.6Q488.3 152.9 488.3 151.6V139.2Q488.3 137.9 489.6 137.9z"/><path d="M494.8 138V142.6H499.2"/><path d="M488 141.8H485.9Q484.6 141.8 484.6 143.1V154.8Q484.6 156.1 485.9 156.1H494.4Q495.7 156.1 495.7 154.8V153.2"/></g>
<g transform="translate(0 0)" fill="none" stroke="#4169ff" stroke-width="1.3" stroke-linecap="round" stroke-linejoin="round" ><path d="M521.4 139H517Q515.8 139 515.8 140.2V154.8Q515.8 156 517 156H523.4M527.6 139H530Q531.2 139 531.2 140.2V142"/><path d="M520.6 139.6Q520.8 137.6 522.6 137.6H526.4Q528.2 137.8 528.4 139.6z" fill="#8ea3ff" stroke-width="0.8"/><path d="M518.6 149.4H522.8M518.6 152.6H522.8M521.2 141.8V145.4M519.6 143V145.4" stroke-width="0.9"/><path d="M525.4 142.8H529.6L534 147.2V154.8Q534 156 532.8 156H525.4Q524.2 156 524.2 154.8V144Q524.2 142.8 525.4 142.8z" fill="#f4f6ff"/><path d="M529.4 143V147.4H533.8"/></g>
<g transform="translate(0 0)" fill="none" stroke="#4169ff" stroke-width="2" stroke-linecap="round" stroke-linejoin="round" ><path d="M552.6 138H566V151.4H564.6" stroke-linejoin="miter" stroke-linecap="butt"/><path d="M548 143V156H561.6V154" stroke-linejoin="miter" stroke-linecap="butt"/><path d="M548 144.4V142.6H549.6M566 150V151.4" stroke-linecap="butt"/><rect x="552.8" y="142.6" width="9" height="9" fill="#4169ff" stroke-width="0.6"/></g>
<g transform="translate(0 0)" fill="none" stroke="#4169ff" stroke-width="2.9" stroke-linecap="round" stroke-linejoin="round" ><g transform="translate(621 117) scale(1.08) translate(-621 -117)"><path d="M621.2 108.2Q624.4 105.4 627.8 107.2Q631.6 110 630 114.2Q629.2 116 626 119Q623.4 121 620.6 119.8"/><path d="M620.8 125.6Q617.6 128.4 614.2 126.6Q610.4 123.8 612 119.6Q612.8 117.8 616 114.8Q618.6 112.8 621.4 114"/></g></g>
<text x="654.2" y="128.8" font-family="'DejaVu Sans','Liberation Sans',sans-serif" font-weight="bold" font-size="22.5" fill="#4169ff" stroke="#4169ff" stroke-width="0.9">A</text>
<text x="669.6" y="116.8" font-family="'Liberation Sans',sans-serif" font-style="italic" font-size="15.5" fill="#4169ff" stroke="#4169ff" stroke-width="0.45">b</text>
<g fill="none" stroke="#888" stroke-width="1.2" stroke-linecap="round" stroke-linejoin="round"><path d="M1295.4 68.9H1292.4Q1290.8 68.9 1290.8 70.5V79.1Q1290.8 80.7 1292.4 80.7H1295.4"/><path d="M1295.6 73H1300.2V70L1305.6 74.9L1300.2 79.8V76.8H1295.6z"/></g>
<g fill="none" stroke="#888" stroke-width="1.2" stroke-linecap="round" stroke-linejoin="round"><circle cx="1383.3" cy="76.1" r="5.8"/><circle cx="1383.3" cy="74.4" r="1.9"/><path d="M1379.6 80.2Q1380.4 77.8 1383.3 77.8Q1386.2 77.8 1387 80.2"/></g>
<g fill="none" stroke="#888" stroke-width="1.2" stroke-linecap="round" stroke-linejoin="round"><rect x="1694.6" y="71.6" width="12" height="8.8" rx="1.2"/><path d="M1695 73.4L1700.6 77.4L1706.2 73.4"/></g>
<text x="1788.6" y="81.4" font-family="'Liberation Sans',sans-serif" font-size="18" fill="#888">?</text>
<g transform="translate(855.7 368.4)" fill="none" stroke="#4169ff" stroke-width="1.4" stroke-linecap="round" stroke-linejoin="round" ><path d="M1 11.6V2Q1 0.9 2.1 0.9H5.6L7.2 2.6H12.6Q13.7 2.6 13.7 3.7V5.8"/><path d="M3.2 6H15.4L13.4 12.4H1.2z"/></g>
<g transform="translate(855.7 501.4)" fill="none" stroke="#4169ff" stroke-width="1.4" stroke-linecap="round" stroke-linejoin="round" ><path d="M1 11.6V2Q1 0.9 2.1 0.9H5.6L7.2 2.6H12.6Q13.7 2.6 13.7 3.7V5.8"/><path d="M3.2 6H15.4L13.4 12.4H1.2z"/></g>
<g transform="translate(898 563.6)" fill="none" stroke="#4169ff" stroke-width="1.4" stroke-linecap="round" stroke-linejoin="round" ><path d="M1 11.6V2Q1 0.9 2.1 0.9H5.6L7.2 2.6H12.6Q13.7 2.6 13.7 3.7V5.8"/><path d="M3.2 6H15.4L13.4 12.4H1.2z"/></g>
<g transform="translate(897.6 778.6)" fill="none" stroke="#4169ff" stroke-width="1.4" stroke-linecap="round" stroke-linejoin="round" ><path d="M1 11.6V2Q1 0.9 2.1 0.9H5.6L7.2 2.6H12.6Q13.7 2.6 13.7 3.7V5.8"/><path d="M3.2 6H15.4L13.4 12.4H1.2z"/></g>
<g transform="translate(877.2 528.2)" fill="none" stroke="#4169ff" stroke-width="1.3" stroke-linecap="round" stroke-linejoin="round" ><path d="M1.2 12.2Q0.8 12.2 0.8 11.4V1.8Q0.8 0.8 1.8 0.8H5.4L7 2.4H13.4Q14.4 2.4 14.4 3.4V4.8"/><path d="M0.9 4.9H14.8V9M9.6 12.4H1.2"/><path d="M3.4 7.3H4.6M6.4 7.3H7.6M9.4 7.3H10.6M12 7.3H12.8" stroke-width="1.1" stroke-linecap="butt"/><path d="M2.8 9L3.6 7.4M11.6 9L12.4 7.4" stroke-width="0.8"/><circle cx="12.8" cy="11.4" r="2.4" fill="#eef1ff" stroke-width="0.9"/><circle cx="12.8" cy="11.4" r="0.6" stroke-width="0.7"/></g>
<g transform="translate(877.2 743.4)" fill="none" stroke="#4169ff" stroke-width="1.3" stroke-linecap="round" stroke-linejoin="round" ><path d="M1.2 12.2Q0.8 12.2 0.8 11.4V1.8Q0.8 0.8 1.8 0.8H5.4L7 2.4H13.4Q14.4 2.4 14.4 3.4V4.8"/><path d="M0.9 4.9H14.8V9M9.6 12.4H1.2"/><path d="M3.4 7.3H4.6M6.4 7.3H7.6M9.4 7.3H10.6M12 7.3H12.8" stroke-width="1.1" stroke-linecap="butt"/><path d="M2.8 9L3.6 7.4M11.6 9L12.4 7.4" stroke-width="0.8"/><circle cx="12.8" cy="11.4" r="2.4" fill="#eef1ff" stroke-width="0.9"/><circle cx="12.8" cy="11.4" r="0.6" stroke-width="0.7"/></g>
<path d="M1703.6 589.2h1.7v1.7h5.4v-1.7h1.7v1.7h1.4q1.4 0 1.4 1.4v10.9q0 1.4-1.4 1.4h-11.6q-1.4 0-1.4-1.4v-10.9q0-1.4 1.4-1.4h1.4z" fill="#4169ff"/><rect x="1702.8" y="597" width="10.4" height="3.2" fill="#fafbfe"/>
<g transform="translate(1726.4 589.6)" fill="none" stroke="#4169ff" stroke-width="1.6" stroke-linecap="round" stroke-linejoin="round" ><path d="M6.4 1L0.9 6L6.4 11V8Q12.4 7.6 15.2 14Q15.6 4.8 6.4 4z"/></g>
<g transform="translate(1726.4 673)" fill="none" stroke="#4169ff" stroke-width="1.6" stroke-linecap="round" stroke-linejoin="round" ><path d="M6.4 1L0.9 6L6.4 11V8Q12.4 7.6 15.2 14Q15.6 4.8 6.4 4z"/></g>
<g transform="translate(0 0)" fill="none" stroke="#4169ff" stroke-width="1.9" stroke-linecap="round" stroke-linejoin="round" ><circle cx="1707" cy="680.2" r="6.3"/><path d="M1711.6 684.8L1715.4 688.6"/></g>
<g transform="translate(0 0)" fill="none" stroke="#4169ff" stroke-width="1.8" stroke-linecap="round" stroke-linejoin="round" ><circle cx="1760" cy="681" r="7.4"/><path d="M1757.6 681H1762.4M1760 678.6V683.4" stroke-width="2"/></g></svg>
</body></html>
